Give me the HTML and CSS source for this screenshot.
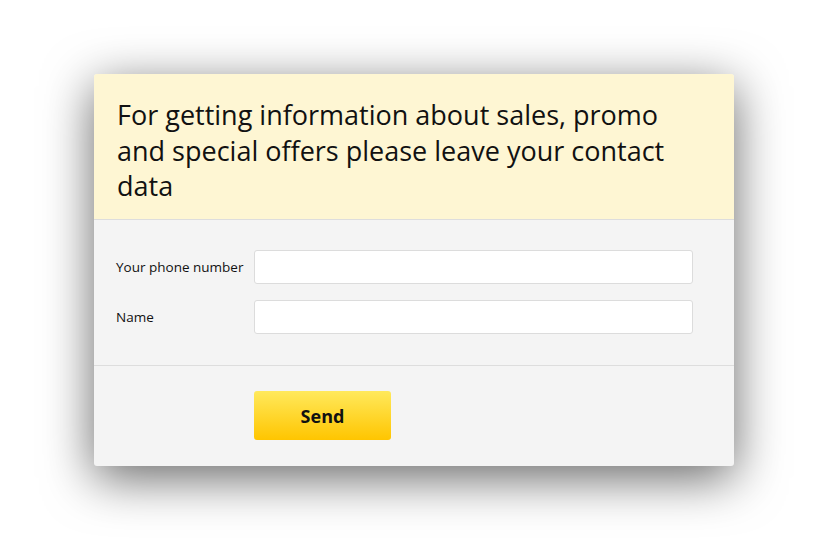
FILE: index.html
```html
<!doctype html>
<html>
<head>
<meta charset="utf-8">
<title>Contact form</title>
<link rel="stylesheet" href="styles.css">
</head>
<body>
<div class="modal">
	<div class="modal-head">
		<h1>For getting information about sales, promo and special offers please leave your contact data</h1>
	</div>
	<form class="modal-body">
		<div class="row">
			<label>Your phone number</label>
			<input type="text">
		</div>
		<div class="row">
			<label>Name</label>
			<input type="text">
		</div>
	</form>
	<div class="modal-foot">
		<button type="button" class="send">Send</button>
	</div>
</div>
</body>
</html>
```
FILE: styles.css
```css
html,body{
	margin:0;
	padding:0;
	background:#fff;
}
body{
	width:824px;
	height:542px;
	padding-top:74px;
	box-sizing:border-box;
	font-family:"Open Sans","Liberation Sans",sans-serif;
	color:#111;
}
.modal{
	width:640px;
	margin-left:94px;
	background:#f4f4f4;
	border-radius:3px;
	box-shadow:0 12px 50px rgba(0,0,0,0.6);
}
.modal-head{
	background:#fef6d3;
	border-radius:3px 3px 0 0;
	border-bottom:1px solid #ddd;
	height:146px;
	padding:23px 60px 0 23px;
	box-sizing:border-box;
}
.modal-head h1{
	margin:0;
	font-size:27px;
	font-weight:normal;
	line-height:35.5px;
}
.modal-body{
	margin:0;
	padding:30px 40px 31px 22px;
	border-bottom:1px solid #ddd;
	display:flex;
	flex-direction:column;
	gap:16px;
}
.row{
	display:flex;
	align-items:center;
}
.row label{
	width:138px;
	font-size:13.5px;
}
.row input{
	width:439px;
	height:34px;
	box-sizing:border-box;
	border:1px solid #dcdcdc;
	border-radius:3px;
	background:#fff;
	padding:0 8px;
}
.modal-foot{
	height:100px;
	padding:25px 0 0 160px;
	box-sizing:border-box;
}
.send{
	width:137px;
	height:49px;
	border:none;
	border-radius:3px;
	background:linear-gradient(#ffe95c,#ffc500);
	font-family:"Open Sans","Liberation Sans",sans-serif;
	font-weight:bold;
	font-size:18px;
	color:#111;
	cursor:pointer;
}
```
